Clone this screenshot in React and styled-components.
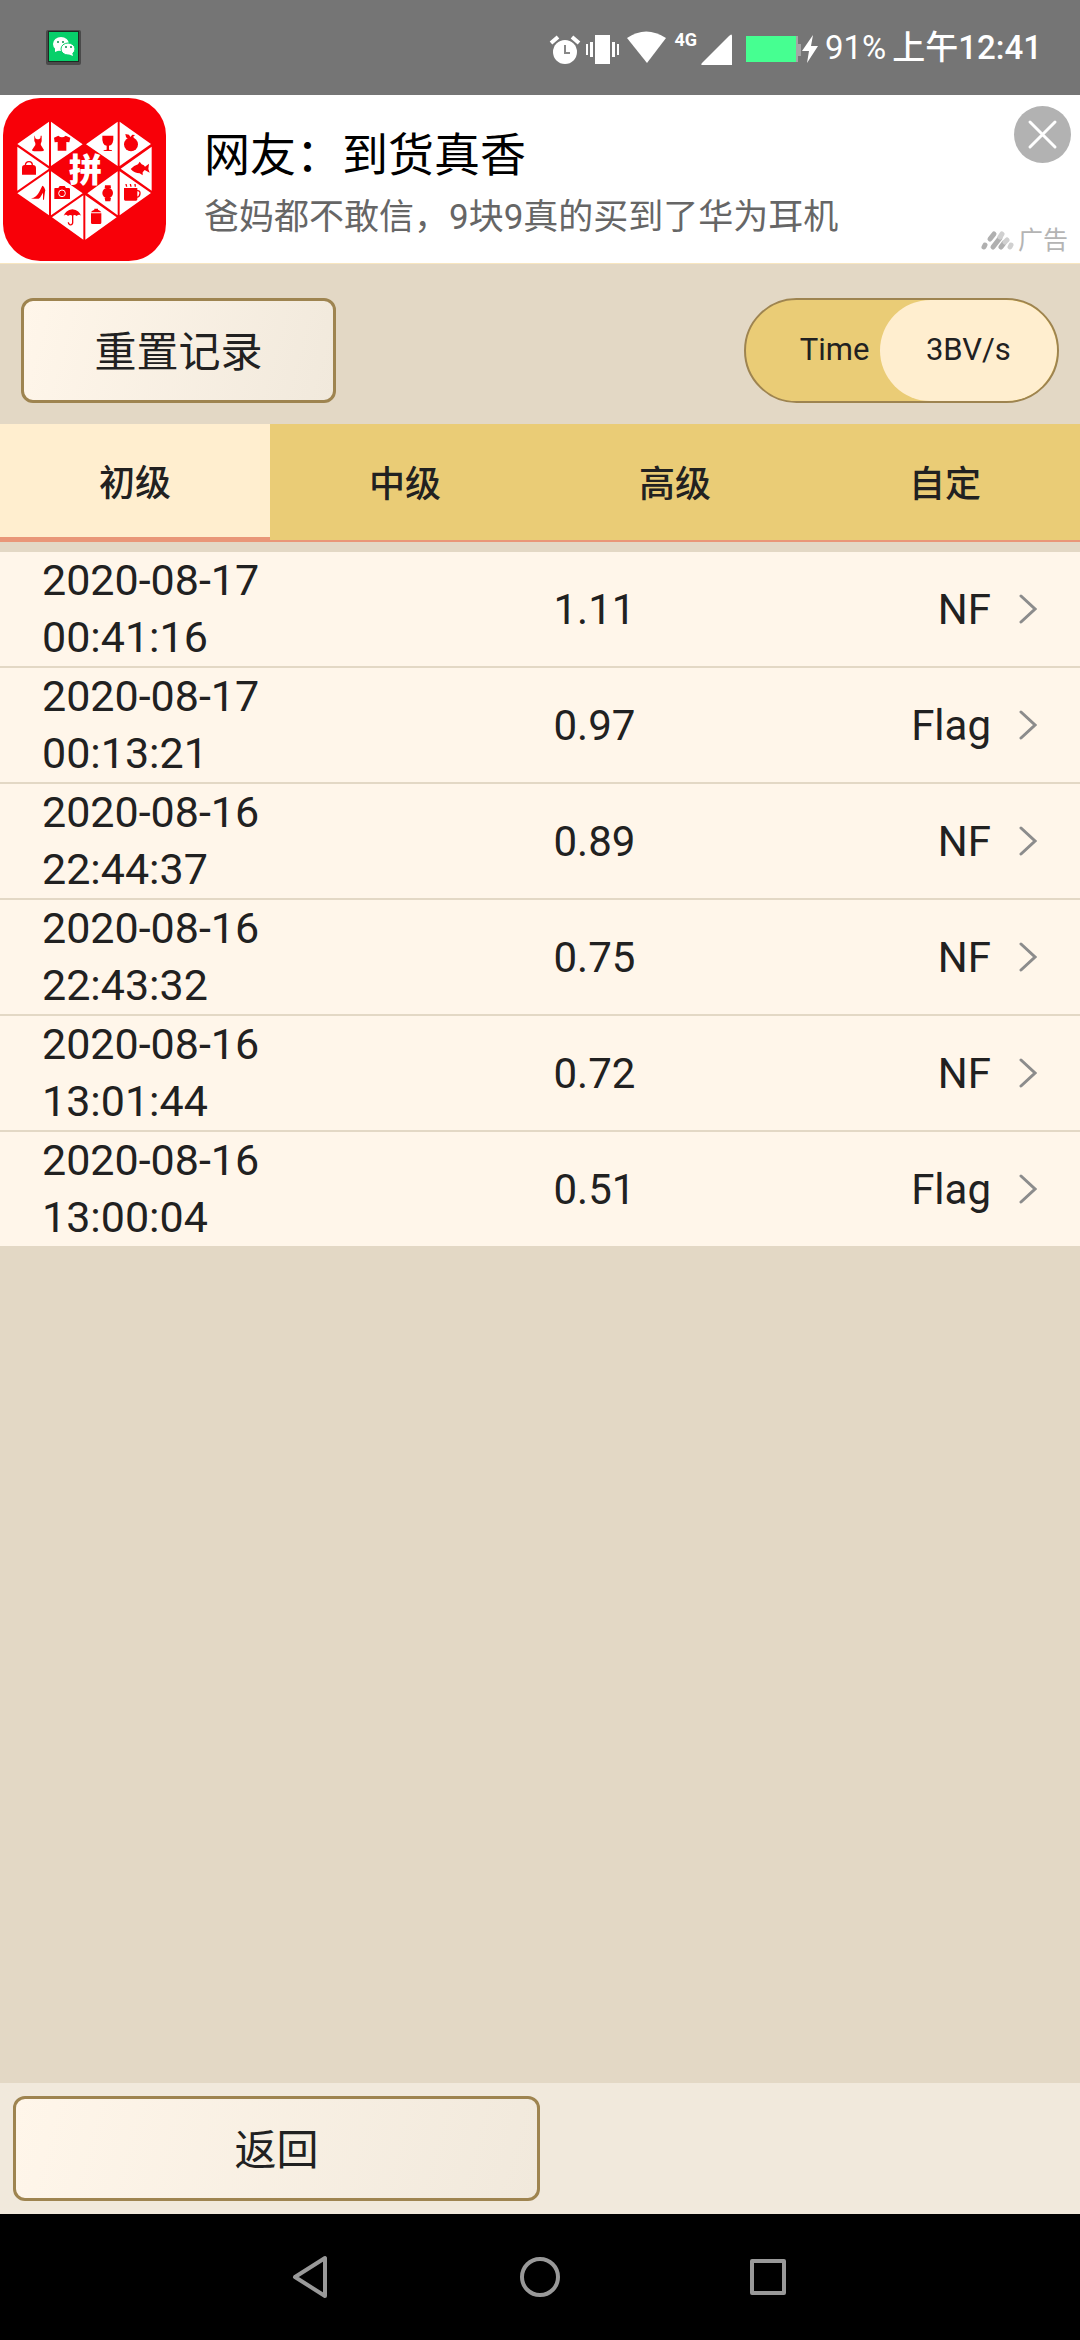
import { useState } from "react";
import styled, { createGlobalStyle } from "styled-components";

const records = [
    { date: "2020-08-17", time: "00:41:16", value: "1.11", type: "NF" },
    { date: "2020-08-17", time: "00:13:21", value: "0.97", type: "Flag" },
    { date: "2020-08-16", time: "22:44:37", value: "0.89", type: "NF" },
    { date: "2020-08-16", time: "22:43:32", value: "0.75", type: "NF" },
    { date: "2020-08-16", time: "13:01:44", value: "0.72", type: "NF" },
    { date: "2020-08-16", time: "13:00:04", value: "0.51", type: "Flag" },
];

const levels = ["初级", "中级", "高级", "自定"];
const modes = ["Time", "3BV/s"];

function App() {
    const [level, setLevel] = useState("初级");
    const [mode, setMode] = useState("3BV/s");

    return (
        <Page>
            <GlobalStyle />
            <StatusBar />
            <AdBanner />
            <Toolbar>
                <ResetButton>重置记录</ResetButton>
                <Toggle>
                    {modes.map((item) => (
                        <ToggleOption
                            key={item}
                            $active={item === mode}
                            aria-pressed={item === mode}
                            onClick={() => setMode(item)}
                        >
                            {item}
                        </ToggleOption>
                    ))}
                </Toggle>
            </Toolbar>
            <Tabs role="tablist">
                {levels.map((item) => (
                    <Tab
                        key={item}
                        role="tab"
                        $active={item === level}
                        aria-selected={item === level}
                        onClick={() => setLevel(item)}
                    >
                        {item}
                    </Tab>
                ))}
            </Tabs>
            <List>
                {records.map((record) => (
                    <li key={record.date + record.time}>
                        <Row>
                            <DateCell>
                                <span>{record.date}</span>
                                <span>{record.time}</span>
                            </DateCell>
                            <span>{record.value}</span>
                            <TypeCell>{record.type}</TypeCell>
                            <Chevron />
                        </Row>
                    </li>
                ))}
            </List>
            <Footer>
                <BackButton>返回</BackButton>
            </Footer>
            <NavBar />
        </Page>
    );
}

const StatusBar = () => (
    <Status>
        <WechatIcon />
        <StatusIcons>
            <svg width="126" height="36" viewBox="0 0 126 36" fill="#fff">
                {/* alarm */}
                <circle cx="17" cy="22" r="12" />
                <path d="M3 13 10 7M24 7l7 6" stroke="#fff" strokeWidth="4" />
                <path d="M17 15v8h5" stroke="#888" strokeWidth="2" fill="none" />
                {/* vibrate */}
                <path d="M47 5h15v29H47zM42 12h3v15h-3zM38 14h2v11h-2zM64 12h3v15h-3zM69 14h2v11h-2z" />
                {/* wifi */}
                <path d="M79 8Q98-5 118 8L99 33z" />
            </svg>
            <Network>4G</Network>
            <svg width="122" height="36" viewBox="0 0 122 36" fill="#fff">
                <path d="M35 6v29H6q-3 0-1-2L32 6q3-3 3 0z" />
                <path d="M99 6h2v8h3v12h-3v6h-2z" fill="#a5a5a5" />
                <path d="M49 6h50v26H49z" fill="#46ff91" />
                <path d="M116 5 105 21h7l-2 12 11-17h-7z" />
            </svg>
            <Battery>91%</Battery>
            <Clock>上午12:41</Clock>
        </StatusIcons>
    </Status>
);

const WechatIcon = () => (
    <svg width="35" height="35" viewBox="0 0 35 35">
        <rect width="35" height="35" rx="2" fill="#4a4a4a" />
        <rect x="2" y="1" width="31" height="31" fill="#1c2b23" />
        <rect x="3" y="2" width="29" height="29" fill="#07d06a" />
        <g fill="#fff">
            <ellipse cx="15" cy="14" rx="8" ry="7" />
            <path d="m9 18 0 4 5-2z" />
            <ellipse cx="22" cy="19" rx="7" ry="6" stroke="#07d06a" />
            <path d="m22 24 5 2-1-4z" />
        </g>
        <g fill="#07914d">
            <circle cx="12" cy="12" r="1" />
            <circle cx="17" cy="12" r="1" />
            <circle cx="20" cy="17" r="1" />
            <circle cx="25" cy="17" r="1" />
        </g>
    </svg>
);

const AdBanner = () => (
    <Ad>
        <AdLogo />
        <AdText>
            <AdTitle>网友：到货真香</AdTitle>
            <AdDescription>爸妈都不敢信，9块9真的买到了华为耳机</AdDescription>
        </AdText>
        <AdSide>
            <CloseButton aria-label="关闭">
                <svg width="57" height="57" viewBox="0 0 57 57">
                    <path d="m16 16 25 25M41 16 16 41" stroke="#fff" strokeWidth="3" strokeLinecap="round" />
                </svg>
            </CloseButton>
            <AdLabel>
                <svg width="34" height="22" viewBox="0 0 34 22" fill="none" strokeWidth="5" strokeLinecap="round">
                    <path d="m4 17 1-2M10 9l4-5M13 17l7-9M21 17l3-4" stroke="#b0b0b0" />
                    <path d="m20 7 2-3M25 12l2-2M30 17l1-2" stroke="#d0d0d0" />
                </svg>
                广告
            </AdLabel>
        </AdSide>
    </Ad>
);

const AdLogo = () => (
    <LogoSvg viewBox="9 294 489 489">
        <rect x="9" y="294" width="489" height="489" rx="112" fill="#f80008" />
        <g fill="#fff">
            <path d="M147 365v133L52 432zM153 365v133l95-65zM353 365v133l-95-65zM359 365v133l94-66z" />
            <path d="M52 440v132l95-66zM455 440v132l-93-66z" />
            <path d="M147 514v132l-95-66zM153 514v132l95-66zM353 514v132l-91-66zM359 514v132l94-67z" />
            <path d="M250 586v133l-94-67zM256 586v133l94-67z" />
        </g>
        <LogoText x="256" y="545" textAnchor="middle">拼</LogoText>
        <g fill="#f80008">
            {/* dress */}
            <path d="M104 407q2 10 4 9 6 3 11 0 3 0 3-9h3v17q-4 8-2 12l9 14q0 4-9 4H102q-7-1-6-4l10-15q2-5-3-12v-16z" />
            {/* shirt */}
            <path d="M162 413l13-6q11 9 22 0l14 6-3 14-9-1v26h-26v-26l-9 1z" />
            {/* glass */}
            <path d="M307 407h33q2 28-13 30v12l9 2v2h-25v-2l9-2v-12q-15-2-13-30z" />
            {/* fruit */}
            <circle cx="393" cy="433" r="21" />
            <path d="m376 402 11 2 4 7 6-7 8 1-6 6 4 4h-22q-4-4-5-13z" />
            {/* bag */}
            <path d="M66 524V503q0-8 8-8h25q8 0 9 8v21z" />
            <path d="M76 498q0-13 11-13t10 13" fill="none" stroke="#f80008" strokeWidth="4" />
            {/* fish */}
            <path d="M392 507q10-10 22-14l5-8 6 8q8 2 10 7l12-9-2 16 4 11-15-8-6 7v9l-9-6q-15 0-27-13z" />
            {/* shoe */}
            <path d="M93 595q17-3 25-20l9-18q6 2 9 14-2 8-4 28h-3v-21l-9 15q-4 6-27 2z" />
            {/* camera */}
            <path d="M164 564h11l4-6h15l4 6h10l2 3v30h-47v-30z" />
            <circle cx="186" cy="580" r="10" fill="none" stroke="#fff" strokeWidth="3" />
            {/* watch */}
            <circle cx="323" cy="579" r="16" />
            <path d="M315 556h17l1 9h-19zM314 594h19l-2 10h-15z" />
            {/* cup */}
            <path d="M372 564h40v34q0 4-4 4h-32q-4 0-4-4zM376 552h4l2 8h-4zM389 552h4l2 8h-4zM403 552h4l1 8h-4z" />
            <path d="M411 572q10-1 9 9t-10 11" fill="none" stroke="#f80008" strokeWidth="4" />
            {/* umbrella */}
            <path d="M191 648q5-17 26-20 22 3 26 20-5-7-13 0-6-6-13-1-7-5-13 1-7-7-13 0z" />
            <path d="M218 642v27q-2 7-9 5-4-2-4-7" fill="none" stroke="#f80008" strokeWidth="4" />
            {/* jar */}
            <path d="M273 640h31v28q0 4-4 4h-23q-4 0-4-4zM273 637q1-5 10-8v-3h11v3q8 3 10 8z" />
        </g>
    </LogoSvg>
);

const Chevron = () => (
    <svg width="18" height="32" viewBox="0 0 18 32" fill="none">
        <path d="M2 3 16 16 2 29" stroke="#8c8c8c" strokeWidth="3" strokeLinecap="round" />
    </svg>
);

const NavBar = () => (
    <Nav>
        <NavButton aria-label="返回">
            <svg width="44" height="44" viewBox="0 0 44 44">
                <path d="M35 3v38L5 22z" />
            </svg>
        </NavButton>
        <NavButton aria-label="主页">
            <svg width="44" height="44" viewBox="0 0 44 44">
                <circle cx="22" cy="22" r="18" />
            </svg>
        </NavButton>
        <NavButton aria-label="最近任务">
            <svg width="44" height="44" viewBox="0 0 44 44">
                <path d="M6 6h32v32H6z" />
            </svg>
        </NavButton>
    </Nav>
);

const GlobalStyle = createGlobalStyle`
    * {
        box-sizing: border-box;
    }

    body {
        margin: 0;
        background-color: #e3d8c5;
        color: #212121;
        font-family: Roboto, "Noto Sans CJK SC", sans-serif;
    }

    button {
        padding: 0;
        border: none;
        background: none;
        color: inherit;
        font-family: inherit;
        cursor: pointer;
    }

    svg {
        display: block;
        flex-shrink: 0;
    }
`

const Page = styled.div`
    min-height: 100vh;
    display: flex;
    flex-direction: column;
`

const Status = styled.header`
    height: 95px;
    padding: 0 38px 0 46px;
    display: flex;
    justify-content: space-between;
    align-items: center;
    background-color: #757575;
    color: white;
`

const StatusIcons = styled.div`
    display: flex;
    align-items: center;
    font-size: 33px;
    line-height: 36px;
`

const Network = styled.span`
    align-self: flex-start;
    font-size: 18px;
    font-weight: 700;
    line-height: 20px;
`

const Battery = styled.span`
    margin: 0 6px;
`

const Clock = styled.span`
    font-weight: 500;
`

const Ad = styled.section`
    height: 169px;
    display: flex;
    align-items: center;
    background-color: white;
    border-bottom: 1px solid #f8e6c0;
`

const LogoSvg = styled.svg`
    width: 163px;
    height: 163px;
    margin: 0 38px 0 3px;
`

const LogoText = styled.text`
    fill: white;
    font-family: "Noto Sans CJK SC", sans-serif;
    font-size: 100px;
    font-weight: 900;
`

const AdText = styled.div`
    flex: 1;
    padding-top: 18px;
    white-space: nowrap;
`

const AdTitle = styled.div`
    color: black;
    font-size: 46px;
    line-height: 60px;
`

const AdDescription = styled.div`
    color: #666;
    font-size: 35px;
    line-height: 66px;
`

const AdSide = styled.div`
    height: 100%;
    padding: 11px 9px 8px 0;
    display: flex;
    flex-direction: column;
    justify-content: space-between;
    align-items: flex-end;
`

const CloseButton = styled.button`
    border-radius: 50%;
    background-color: #b2b2b2;
`

const AdLabel = styled.div`
    padding-right: 3px;
    display: flex;
    align-items: center;
    gap: 4px;
    color: #b4b4b4;
    font-size: 25px;
    line-height: 28px;
`

const Toolbar = styled.div`
    padding: 34px 21px 21px;
    display: flex;
    justify-content: space-between;
`

const Button = styled.button`
    height: 105px;
    padding-bottom: 4px;
    border: 3px solid #9e8450;
    border-radius: 12px;
    background: linear-gradient(105deg, #fff6ea, #f1e9dc);
    font-size: 42px;
`

const ResetButton = styled(Button)`
    width: 315px;
`

const BackButton = styled(Button)`
    width: 50%;
`

const Toggle = styled.div`
    width: 315px;
    height: 105px;
    display: flex;
    overflow: hidden;
    border: 2px solid #9e8450;
    border-radius: 53px;
    background-color: #eacc76;
`

const ToggleOption = styled.button`
    width: 57%;
    padding-bottom: 2px;
    border-radius: 53px;
    background-color: ${({ $active }) => ($active ? "#ffeecf" : "transparent")};
    font-size: 31px;

    & + & {
        margin-left: -14%;
    }
`

const Tabs = styled.div`
    display: flex;
    background-color: #eacc76;
`

const Tab = styled.button`
    flex: 1;
    height: 118px;
    padding-bottom: 2px;
    border-bottom: ${({ $active }) => ($active ? "5px" : "2px")} solid #e99678;
    background-color: ${({ $active }) => ($active ? "#ffeecf" : "transparent")};
    font-size: 36px;
    font-weight: 500;
`

const List = styled.ul`
    flex: 1;
    margin: 10px 0 0;
    padding: 0;
    list-style: none;
`

const Row = styled.button`
    width: 100%;
    padding: 0 43px 0 42px;
    display: grid;
    grid-template-columns: 50% 1fr auto auto;
    column-gap: 14px;
    align-items: center;
    border-bottom: 2px solid #e3d8c5;
    background-color: #fff6ea;
    font-size: 42px;
    line-height: 57px;
    text-align: left;
`

const DateCell = styled.span`
    display: flex;
    flex-direction: column;
    font-size: 43px;
`

const TypeCell = styled.span`
    margin-right: 14px;
`

const Footer = styled.footer`
    padding: 13px;
    background-color: #f1e9dc;
`

const Nav = styled.nav`
    height: 126px;
    padding: 0 198px;
    display: flex;
    background-color: black;
`

const NavButton = styled.button`
    flex: 1;
    display: flex;
    justify-content: center;
    align-items: center;

    path, circle {
        fill: none;
        stroke: #999;
        stroke-width: 4;
        stroke-linejoin: round;
    }
`

export default App;
